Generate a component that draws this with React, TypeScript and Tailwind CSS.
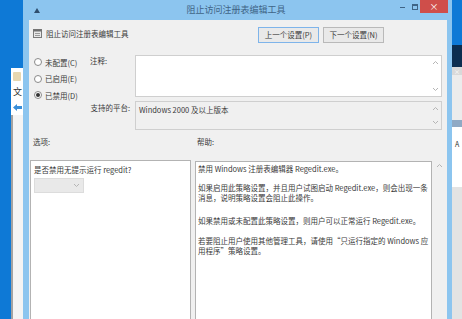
import React from "react";

const font = { fontFamily: '"Noto Sans CJK SC", "Noto Sans", sans-serif' };

function Radio({ label, checked }: { label: string; checked?: boolean }) {
  return (
    <div className="flex h-[16.5px] items-center gap-[3px]">
      <span className="flex h-[8px] w-[8px] items-center justify-center rounded-full border border-[#8a8a8a] bg-white">
        {checked ? <span className="h-[4px] w-[4px] rounded-full bg-[#333]" /> : null}
      </span>
      <span>{label}</span>
    </div>
  );
}

function Chevron({ up, className }: { up?: boolean; className?: string }) {
  return (
    <svg width="7" height="5" viewBox="0 0 7 5" className={className}>
      <path
        d={up ? "M1 4 L3.5 1.5 L6 4" : "M1 1 L3.5 3.5 L6 1"}
        fill="none"
        stroke="#b5b5b5"
        strokeWidth="1"
      />
    </svg>
  );
}

function Button({ children, focused }: { children: React.ReactNode; focused?: boolean }) {
  return (
    <div
      className={
        "flex h-[16px] w-[61px] items-center justify-center border bg-[#e9e9e9] " +
        (focused ? "border-[#7eb4ea]" : "border-[#b9b9b9]")
      }
    >
      {children}
    </div>
  );
}

function PolicyIcon() {
  return (
    <svg width="9" height="9" viewBox="0 0 9 9">
      <rect x="0.5" y="0.5" width="8" height="8" fill="#e8e8e8" stroke="#7a7a7a" />
      <rect x="0.5" y="0.5" width="8" height="2" fill="#6f6f6f" />
      <path d="M2 4.5 H7 M2 6.5 H7" stroke="#9a9a9a" />
    </svg>
  );
}

function LeftDesktop() {
  return (
    <div className="flex h-[319px] w-[23px] shrink-0 flex-col bg-[#0e79d6]">
      <div className="h-[68px]" />
      <div className="ml-[11px] flex flex-col bg-white">
        <div className="flex h-[16px] items-center justify-center">
          <span className="h-[9px] w-[8px] rounded-[1px] bg-[#e7d7b0]" />
        </div>
        <div className="flex h-[15px] items-center pl-[2px] text-[9px] text-[#333]">文</div>
        <div className="flex h-[16px] items-center pl-[2px]">
          <svg width="9" height="7" viewBox="0 0 9 7">
            <path d="M0 3.5 L4 0 V2 H9 V5 H4 V7 Z" fill="#3a8fd9" />
          </svg>
        </div>
      </div>
      <div className="ml-[11px] flex flex-1">
        <div className="w-[2px] bg-[#a3a3a3]" />
        <div className="flex-1 bg-[#f4f4f4]" />
      </div>
    </div>
  );
}

function RightDesktop() {
  return (
    <div className="flex h-[319px] w-[10px] shrink-0 flex-col">
      <div className="h-[45px] bg-[#0e79d6]" />
      <div className="h-[22px] bg-[#0c2d4f]" />
      <div className="flex h-[8px] items-center bg-[#d9d9d9] pl-[2px] text-[6px] text-white">×</div>
      <div className="h-[45px] bg-[#ececec]" />
      <div className="h-[7px] bg-[#8fa9c4]" />
      <div className="flex h-[60px] items-start bg-white pl-[3px] pt-[12px] text-[7px] text-[#333]">A</div>
      <div className="flex-1 bg-[#e3e3e3]" />
    </div>
  );
}

export default function App() {
  return (
    <div className="flex h-[319px] w-[462px] overflow-hidden text-[7.5px] text-[#3a3a3a]" style={font}>
      <LeftDesktop />
      <div className="flex h-[319px] w-[429px] shrink-0 flex-col overflow-hidden bg-[#8cc5ef]">
        <div className="flex h-[20px] shrink-0 items-start">
          <div className="flex h-[20px] w-[24px] items-center justify-center pl-[4px]">
            <svg width="8" height="7" viewBox="0 0 8 7">
              <path d="M1 6 L4 1 L7 6 Z" fill="#2f4e6e" />
            </svg>
          </div>
          <div className="flex h-[20px] flex-1 items-center justify-center pl-[30px] text-[9px] text-[#3f6486]">
            阻止访问注册表编辑工具
          </div>
          <div className="flex h-[13px] items-center">
            <div className="flex w-[14px] justify-center">
              <span className="mt-[2px] h-[1px] w-[5px] bg-[#3f6486]" />
            </div>
            <div className="flex w-[11px] justify-center">
              <span className="h-[6px] w-[6px] border border-t-2 border-[#3f6486]" />
            </div>
            <div className="flex h-[13px] w-[28px] items-center justify-center bg-[#cf4e4a] text-[9px] leading-none text-white">
              ×
            </div>
          </div>
          <div className="w-[4px]" />
        </div>
        <div className="flex flex-1">
          <div className="w-[6px] shrink-0" />
          <div className="flex w-[418px] shrink-0 flex-col bg-[#f0f0f0]">
            <div className="mt-[7px] flex h-[16px] items-center">
              <div className="ml-[4px] flex items-center gap-[4px] self-start pt-[1px]">
                <PolicyIcon />
                <span>阻止访问注册表编辑工具</span>
              </div>
              <div className="ml-auto mr-[63px] flex gap-[4px]">
                <Button focused>上一个设置(P)</Button>
                <Button>下一个设置(N)</Button>
              </div>
            </div>

            <div className="mt-[12px] flex">
              <div className="-mt-[1px] w-[60px] shrink-0 pl-[5px]">
                <Radio label="未配置(C)" />
                <Radio label="已启用(E)" />
                <Radio label="已禁用(D)" checked />
              </div>
              <div className="grid grid-cols-[46px_307px] gap-y-[4px]">
                <div className="pl-[1px]">注释:</div>
                <div className="flex h-[42px] justify-end border border-[#cfcfcf] bg-white">
                  <div className="flex w-[11px] flex-col items-center justify-between py-[4px]">
                    <Chevron up />
                    <Chevron />
                  </div>
                </div>
                <div className="flex h-[14px] items-center justify-end pr-[5px]">支持的平台:</div>
                <div className="flex h-[29px] border border-[#cfcfcf] bg-[#f0f0f0]">
                  <div className="flex-1 pl-[3px] pt-[2px]">Windows 2000 及以上版本</div>
                  <div className="flex w-[11px] flex-col items-center justify-between py-[4px]">
                    <Chevron up />
                    <Chevron />
                  </div>
                </div>
              </div>
            </div>

            <div className="mt-[7px] flex h-[10px] items-center">
              <span className="ml-[4px] w-[164px]">选项:</span>
              <span>帮助:</span>
            </div>

            <div className="mt-[13px] flex h-[170px] gap-[4px] pl-[1px]">
              <div className="flex w-[161px] shrink-0 flex-col border border-[#b3b3b3] bg-white pl-[3px] pt-[3px]">
                <div className="leading-[11px]">是否禁用无提示运行 regedit?</div>
                <div className="mt-[3px] flex h-[15px] w-[50px] items-center justify-end border border-[#dcdcdc] bg-[#e9e9e9] pr-[3px]">
                  <Chevron />
                </div>
              </div>
              <div className="flex flex-1">
                <div className="mt-[1px] flex w-[237px] shrink-0 flex-col whitespace-nowrap border border-[#b3b3b3] bg-white pl-[2px] pt-[2px] leading-[10px]">
                  <p>禁用 Windows 注册表编辑器 Regedit.exe。</p>
                  <p className="mt-[9px]">
                    如果启用此策略设置，并且用户试图启动 Regedit.exe，则会出现一条
                    <br />
                    消息，说明策略设置会阻止此操作。
                  </p>
                  <p className="mt-[13px]">如果禁用或未配置此策略设置，则用户可以正常运行 Regedit.exe。</p>
                  <p className="mt-[10px]">
                    若要阻止用户使用其他管理工具，请使用“只运行指定的 Windows 应
                    <br />
                    用程序”策略设置。
                  </p>
                </div>
                <div className="flex flex-1 justify-center pt-[3px]">
                  <Chevron up />
                </div>
              </div>
            </div>
          </div>
          <div className="w-[5px] shrink-0" />
        </div>
      </div>
      <RightDesktop />
    </div>
  );
}
